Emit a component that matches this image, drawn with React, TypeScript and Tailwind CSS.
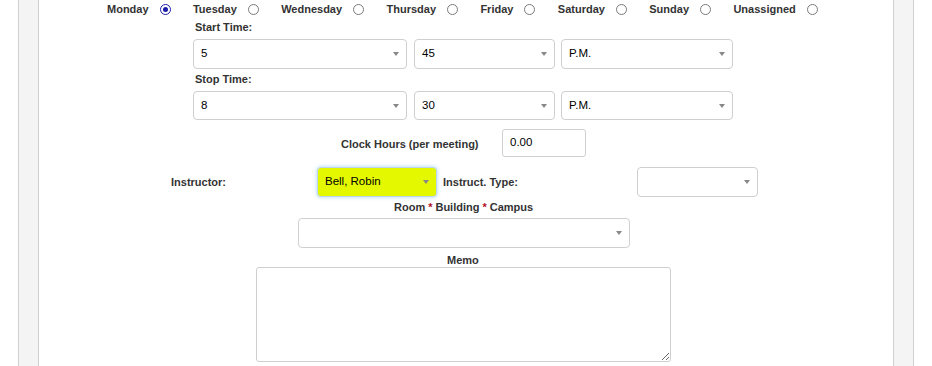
import React from 'react'

const days = ['Monday', 'Tuesday', 'Wednesday', 'Thursday', 'Friday', 'Saturday', 'Sunday', 'Unassigned']

function Radio({ checked }: { checked?: boolean }) {
  return (
    <span
      className={`ml-[11px] flex h-[11px] w-[11px] items-center justify-center rounded-full bg-white ${
        checked ? 'border-[1.5px] border-[#1c1ca8]' : 'border border-[#7a7a7a]'
      }`}
    >
      {checked && <span className="h-[5px] w-[5px] rounded-full bg-[#1c1ca8]" />}
    </span>
  )
}

function Select({ value, className }: { value?: string; className: string }) {
  return (
    <div className={`flex items-center justify-between rounded-[4px] border pl-[7px] pr-[7px] text-[11.5px] text-black ${className}`}>
      <span>{value}</span>
      <span className="h-0 w-0 border-l-[3px] border-r-[3px] border-t-[4px] border-l-transparent border-r-transparent border-t-[#888]" />
    </div>
  )
}

export default function App() {
  return (
    <div className="flex h-[366px] w-[932px] overflow-hidden bg-white font-[Liberation_Sans,Arial,sans-serif] text-[11px] text-[#333]">
      <div className="w-[18px] shrink-0" />
      <div className="w-[21px] shrink-0 border-x border-[#d0d0d0] bg-[#f4f4f4]" />

      <main className="flex w-[854px] shrink-0 flex-col">
        <div className="flex h-[18px] items-center pl-[68px] font-bold">
          {days.map((d, i) => (
            <div key={d} className={`flex items-center ${i > 0 ? 'ml-[22.4px]' : ''}`}>
              <span>{d}</span>
              <Radio checked={i === 0} />
            </div>
          ))}
        </div>

        <div className="ml-[154px] flex w-[540px] flex-col">
          <div className="mt-[2px] flex h-[14px] items-center pl-[2px] font-bold">Start Time:</div>
          <div className="mt-[5px] flex h-[30px] gap-[7px]">
            <Select value="5" className="w-[214px] border-[#cfcfcf]" />
            <Select value="45" className="w-[141px] border-[#cfcfcf]" />
            <Select value="P.M." className="ml-[-1px] w-[172px] border-[#cfcfcf]" />
          </div>
          <div className="mt-[3px] flex h-[14px] items-center pl-[2px] font-bold">Stop Time:</div>
          <div className="mt-[5px] flex h-[29px] gap-[7px]">
            <Select value="8" className="w-[214px] border-[#cfcfcf]" />
            <Select value="30" className="w-[141px] border-[#cfcfcf]" />
            <Select value="P.M." className="ml-[-1px] w-[172px] border-[#cfcfcf]" />
          </div>
        </div>

        <div className="mt-[9px] flex h-[28px] items-center pl-[302px]">
          <span className="mt-[2px] w-[161px] font-bold">Clock Hours (per meeting)</span>
          <div className="flex h-[28px] w-[84px] items-center rounded-[3px] border border-[#cfcfcf] pl-[7px] text-[11.5px] text-black">
            0.00
          </div>
        </div>

        <div className="mt-[10px] flex h-[30px] items-center pl-[132px]">
          <span className="w-[146px] font-bold">Instructor:</span>
          <Select
            value="Bell, Robin"
            className="h-[30px] w-[120px] border-[#bcd6ee] bg-[#e4f900] shadow-[0_0_4px_rgba(102,175,233,0.55)]"
          />
          <span className="ml-[6px] w-[194px] font-bold">Instruct. Type:</span>
          <Select className="h-[30px] w-[121px] border-[#cfcfcf]" />
        </div>

        <div className="mt-[3px] flex h-[14px] items-center pl-[355px] font-bold">
          Room <span className="mx-[3px] text-[#b0102a]">*</span> Building <span className="mx-[3px] text-[#b0102a]">*</span> Campus
        </div>
        <div className="mt-[4px] pl-[259px]">
          <Select className="h-[30px] w-[332px] border-[#cfcfcf]" />
        </div>

        <div className="mt-[5px] flex h-[14px] items-center pl-[408px] font-bold">Memo</div>
        <div className="pl-[217px]">
          <textarea className="block h-[95px] w-[415px] rounded-[3px] border border-[#cfcfcf] outline-none" />
        </div>
      </main>

      <div className="w-[21px] shrink-0 border-x border-[#d0d0d0] bg-[#f4f4f4]" />
    </div>
  )
}
